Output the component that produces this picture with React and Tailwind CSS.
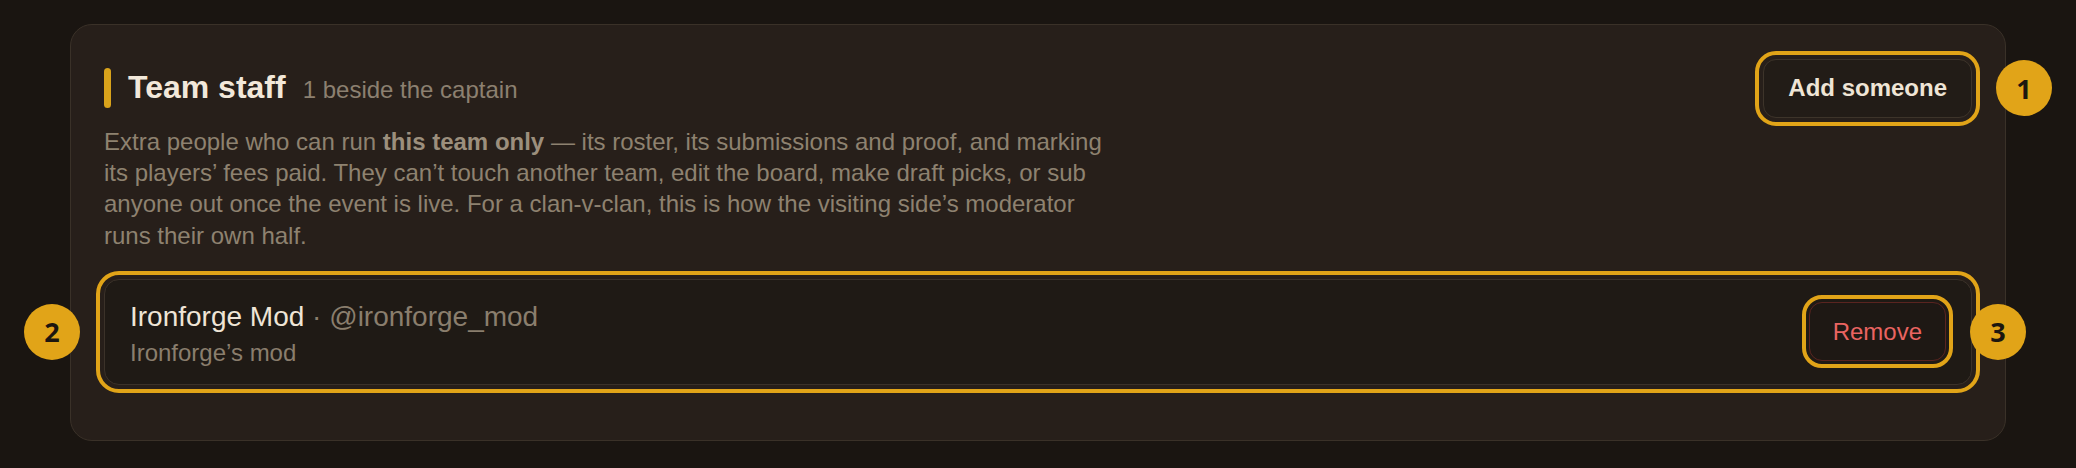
import React from "react";

function Badge({ n, className }) {
  return (
    <span
      className={
        "absolute top-1/2 z-10 flex h-[56px] w-[56px] -translate-y-1/2 items-center justify-center rounded-full bg-[#e1a418] text-[27px] font-bold leading-none text-[#1c160f] " +
        className
      }
      style={{ fontFamily: '"Open Sans", "Noto Sans", sans-serif' }}
    >
      {n}
    </span>
  );
}

function StaffRow({ name, handle, note }) {
  return (
    <div className="relative mt-[28px] flex items-center justify-between rounded-[15px] border border-[#3b3229] bg-[#1f1a15] pl-[25px] pr-[25px] outline-4 outline-offset-4 outline-[#e1a418]">
      <Badge n="2" className="right-[calc(100%+25px)]" />
      <div className="pt-[19px] pb-[16px]">
        <div className="text-[28px] leading-[36px] text-[#efe5d6]">
          {name}
          <span className="text-[#8a7e6d]"> · {handle}</span>
        </div>
        <div className="mt-[2px] text-[24px] leading-[31px] text-[#8a7e6d]">{note}</div>
      </div>
      <div className="relative">
        <button className="h-[59px] rounded-[13px] border border-[#5a2420] bg-[#1e1814] px-[23px] text-[24px] text-[#ea6461] outline-4 outline-offset-[3px] outline-[#e1a418]">
          Remove
        </button>
        <Badge n="3" className="left-[calc(100%+24px)]" />
      </div>
    </div>
  );
}

export default function App() {
  return (
    <div
      className="min-h-screen bg-[#1a1511] px-[70px] pt-[24px]"
      style={{ fontFamily: '"Liberation Sans", Arial, sans-serif' }}
    >
      <div className="rounded-[22px] border border-[#3a3128] bg-[#271f1a] px-[33px] pt-[33px] pb-[55px]">
        {/* header */}
        <div className="flex h-[60px] items-center justify-between">
          <div className="flex items-center">
            <span className="h-[40px] w-[7px] rounded-full bg-[#d9a31b]" />
            <div className="ml-[17px] flex items-baseline">
              <h2 className="text-[32px] font-bold leading-[40px] text-[#f2e8da]">Team staff</h2>
              <span className="ml-[17px] text-[24px] leading-[40px] text-[#8c8070]">1 beside the captain</span>
            </div>
          </div>
          <div className="relative">
            <button className="h-[59px] rounded-[13px] border border-[#3d342a] bg-[#221c17] px-[24px] text-[24px] font-bold text-[#efe5d6] outline-4 outline-offset-4 outline-[#e1a418]">
              Add someone
            </button>
            <Badge n="1" className="left-[calc(100%+24px)]" />
          </div>
        </div>

        <p className="mt-[8px] max-w-[1020px] text-[24px] leading-[31.2px] text-[#8e8270]">
          Extra people who can run <strong className="font-bold text-[#9c8f7d]">this team only</strong> — its roster,
          its submissions and proof, and marking its players’ fees paid. They can’t touch another team, edit the
          board, make draft picks, or sub anyone out once the event is live. For a clan-v-clan, this is how the
          visiting side’s moderator runs their own half.
        </p>

        <StaffRow name="Ironforge Mod" handle="@ironforge_mod" note="Ironforge’s mod" />
      </div>
    </div>
  );
}
